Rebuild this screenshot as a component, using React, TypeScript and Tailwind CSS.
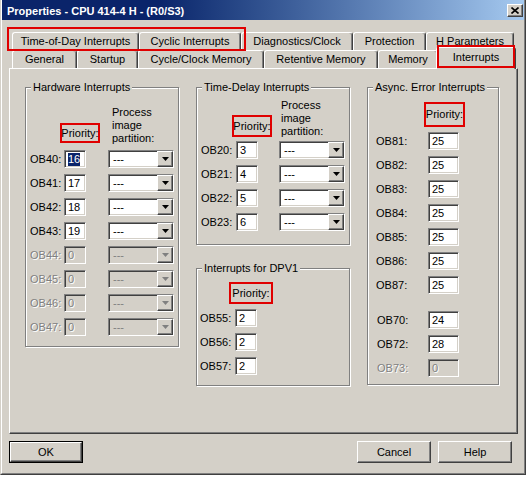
import React from "react";

const raised =
  "border border-t-white border-l-white border-r-[#404040] border-b-[#404040] shadow-[inset_-1px_-1px_0_#808080]";
const sunken =
  "border border-t-[#808080] border-l-[#808080] border-r-white border-b-white shadow-[inset_1px_1px_0_#404040,inset_-1px_-1px_0_#d4d0c8]";

function Tab({ label, w, active }: { label: string; w: string; active?: boolean }) {
  return (
    <div
      className={`${w} ${
        active ? "h-[22px] -mx-[2px] -mb-px relative z-10 bg-[#d4d0c8] pb-[3px]" : "h-[18px]"
      } shrink-0 flex items-center justify-center whitespace-nowrap rounded-t-[3px] border-t border-l border-r border-t-white border-l-white border-r-[#404040] shadow-[inset_-1px_0_0_#808080]`}
    >
      {label}
    </div>
  );
}

function Group({
  title,
  className,
  children,
}: {
  title: string;
  className: string;
  children: React.ReactNode;
}) {
  return (
    <div
      className={`relative border border-[#808080] shadow-[inset_1px_1px_0_#fff,1px_1px_0_#fff] ${className}`}
    >
      <span className="absolute -top-[7px] left-[5px] px-[2px] bg-[#d4d0c8] leading-[13px] whitespace-nowrap">
        {title}
      </span>
      {children}
    </div>
  );
}

function Priority({ className }: { className: string }) {
  return (
    <div
      className={`border-2 border-[#e00000] flex items-center justify-center whitespace-nowrap ${className}`}
    >
      Priority:
    </div>
  );
}

function Field({
  value,
  w,
  disabled,
  selected,
}: {
  value: string;
  w: string;
  disabled?: boolean;
  selected?: boolean;
}) {
  return (
    <div
      className={`${w} h-[18px] shrink-0 flex items-center pl-[3px] ${sunken} ${
        disabled ? "bg-[#d4d0c8] text-[#808080] [text-shadow:1px_1px_0_#fff]" : "bg-white"
      }`}
    >
      {selected ? <span className="bg-[#0a246a] text-white leading-[13px]">{value}</span> : value}
    </div>
  );
}

function Combo({ disabled }: { disabled?: boolean }) {
  return (
    <div
      className={`w-[66px] h-[18px] shrink-0 flex items-center ${sunken} ${
        disabled ? "bg-[#d4d0c8] text-[#808080]" : "bg-white"
      }`}
    >
      <span className="flex-1 pl-[4px] leading-none">---</span>
      <span
        className={`w-[16px] h-[16px] flex items-center justify-center bg-[#d4d0c8] ${raised}`}
      >
        <svg width="7" height="4" viewBox="0 0 7 4">
          <path d="M0 0h7L3.5 4z" fill={disabled ? "#808080" : "#000"} />
        </svg>
      </span>
    </div>
  );
}

function Label({ text, w, disabled }: { text: string; w: string; disabled?: boolean }) {
  return (
    <span
      className={`${w} shrink-0 ${
        disabled ? "text-[#808080] [text-shadow:1px_1px_0_#fff]" : ""
      }`}
    >
      {text}
    </span>
  );
}

const hardware = [
  { ob: "OB40:", v: "16", sel: true },
  { ob: "OB41:", v: "17" },
  { ob: "OB42:", v: "18" },
  { ob: "OB43:", v: "19" },
  { ob: "OB44:", v: "0", dis: true },
  { ob: "OB45:", v: "0", dis: true },
  { ob: "OB46:", v: "0", dis: true },
  { ob: "OB47:", v: "0", dis: true },
];

const timeDelay = [
  { ob: "OB20:", v: "3" },
  { ob: "OB21:", v: "4" },
  { ob: "OB22:", v: "5" },
  { ob: "OB23:", v: "6" },
];

const dpv1 = [
  { ob: "OB55:", v: "2" },
  { ob: "OB56:", v: "2" },
  { ob: "OB57:", v: "2" },
];

const asyncA = ["OB81:", "OB82:", "OB83:", "OB84:", "OB85:", "OB86:", "OB87:"];
const asyncB = [
  { ob: "OB70:", v: "24" },
  { ob: "OB72:", v: "28" },
  { ob: "OB73:", v: "0", dis: true },
];

export default function App() {
  return (
    <div className="relative w-[528px] h-[477px] bg-white font-['Liberation_Sans',Arial,sans-serif] text-[11px] text-black overflow-hidden">
      {/* dialog frame */}
      <div className="w-[526px] h-[475px] bg-[#d4d0c8] border-l border-r border-b border-l-[#d4d0c8] border-r-[#404040] border-b-[#404040]">
        <div className="h-full flex flex-col border-l border-r border-b border-l-white border-r-[#808080] border-b-[#808080]">
          {/* title bar */}
          <div className="h-[20px] flex items-center pl-[5px] pr-[1px] bg-linear-to-r from-[#0a246a] from-30% to-[#a6caf0] text-white font-bold">
            <span className="flex-1 pt-[2px]">Properties - CPU 414-4 H - (R0/S3)</span>
            <span className={`w-[16px] h-[13px] flex items-center justify-center bg-[#d4d0c8] ${raised}`}>
              <svg width="8" height="7" viewBox="0 0 8 7">
                <path d="M0.5 0.5L7.5 6.5M7.5 0.5L0.5 6.5" stroke="#000" strokeWidth="1.6" />
              </svg>
            </span>
          </div>

          <div className="pl-[7px] pr-[6px] pt-[12px]">
            {/* tabs */}
            <div className="flex pl-[3px]">
              <Tab label="Time-of-Day Interrupts" w="w-[127px]" />
              <Tab label="Cyclic Interrupts" w="w-[102px]" />
              <Tab label="Diagnostics/Clock" w="w-[112px]" />
              <Tab label="Protection" w="w-[73px]" />
              <Tab label="H Parameters" w="w-[88px]" />
            </div>
            <div className="flex items-end h-[18px] pl-[3px]">
              <Tab label="General" w="w-[65px]" />
              <Tab label="Startup" w="w-[61px]" />
              <Tab label="Cycle/Clock Memory" w="w-[126px]" />
              <Tab label="Retentive Memory" w="w-[114px]" />
              <Tab label="Memory" w="w-[60px]" />
              <Tab label="Interrupts" w="w-[80px]" active />
            </div>

            {/* panel */}
            <div className={`w-[509px] h-[366px] flex items-start gap-[17px] pl-[15px] pt-[18px] ${raised}`}>
              <Group title="Hardware Interrupts" className="w-[154px] pt-[18px] pb-[10px]">
                <div className="flex items-end h-[39px]">
                  <Priority className="ml-[34px] mb-[2px] w-[40px] h-[20px]" />
                  <div className="ml-[12px] leading-[13px]">
                    Process
                    <br />
                    image
                    <br />
                    partition:
                  </div>
                </div>
                <div className="mt-[5px] flex flex-col gap-[6px] pl-[4px]">
                  {hardware.map((r) => (
                    <div key={r.ob} className="h-[18px] flex items-center">
                      <Label text={r.ob} w="w-[34px]" disabled={r.dis} />
                      <Field value={r.v} w="w-[22px]" disabled={r.dis} selected={r.sel} />
                      <div className="ml-[22px]">
                        <Combo disabled={r.dis} />
                      </div>
                    </div>
                  ))}
                </div>
              </Group>

              <div className="w-[154px] flex flex-col">
                <Group title="Time-Delay Interrupts" className="pt-[11px] pb-[13px]">
                  <div className="flex items-end h-[39px]">
                    <Priority className="ml-[35px] mb-px w-[40px] h-[22px]" />
                    <div className="ml-[9px] leading-[13px]">
                      Process
                      <br />
                      image
                      <br />
                      partition:
                    </div>
                  </div>
                  <div className="mt-[3px] flex flex-col gap-[6px] pl-[4px]">
                    {timeDelay.map((r) => (
                      <div key={r.ob} className="h-[18px] flex items-center">
                        <Label text={r.ob} w="w-[35px]" />
                        <Field value={r.v} w="w-[22px]" />
                        <div className="ml-[21px]">
                          <Combo />
                        </div>
                      </div>
                    ))}
                  </div>
                </Group>

                <Group title="Interrupts for DPV1" className="mt-[23px] pt-[13px] pb-[10px]">
                  <Priority className="ml-[32px] w-[44px] h-[22px]" />
                  <div className="mt-[5px] flex flex-col gap-[6px] pl-[3px]">
                    {dpv1.map((r) => (
                      <div key={r.ob} className="h-[18px] flex items-center">
                        <Label text={r.ob} w="w-[35px]" />
                        <Field value={r.v} w="w-[22px]" />
                      </div>
                    ))}
                  </div>
                </Group>
              </div>

              <Group title="Async. Error Interrupts" className="w-[132px] pt-[14px] pb-[7px]">
                <Priority className="ml-[56px] w-[41px] h-[25px]" />
                <div className="mt-[5px] flex flex-col gap-[6px] pl-[8px]">
                  {asyncA.map((ob) => (
                    <div key={ob} className="h-[18px] flex items-center">
                      <Label text={ob} w="w-[52px]" />
                      <Field value="25" w="w-[31px]" />
                    </div>
                  ))}
                </div>
                <div className="mt-[17px] flex flex-col gap-[6px] pl-[9px]">
                  {asyncB.map((r) => (
                    <div key={r.ob} className="h-[18px] flex items-center">
                      <Label text={r.ob} w="w-[51px]" disabled={r.dis} />
                      <Field value={r.v} w="w-[31px]" disabled={r.dis} />
                    </div>
                  ))}
                </div>
              </Group>
            </div>

            {/* buttons */}
            <div className="mt-[7px] flex items-center pr-[6px]">
              <div className="w-[74px] h-[22px] border border-black">
                <div className={`h-full flex items-center justify-center ${raised}`}>OK</div>
              </div>
              <div className="flex-1" />
              <div className={`w-[74px] h-[22px] flex items-center justify-center ${raised}`}>Cancel</div>
              <div className={`ml-[7px] w-[74px] h-[22px] flex items-center justify-center ${raised}`}>Help</div>
            </div>
          </div>
        </div>
      </div>

      {/* red annotation boxes */}
      <div className="absolute left-[7px] top-[27px] w-[239px] h-[24px] border-2 border-[#e00000] pointer-events-none" />
      <div className="absolute left-[437px] top-[45px] w-[78px] h-[23px] border-2 border-[#e00000] pointer-events-none z-20" />
    </div>
  );
}
